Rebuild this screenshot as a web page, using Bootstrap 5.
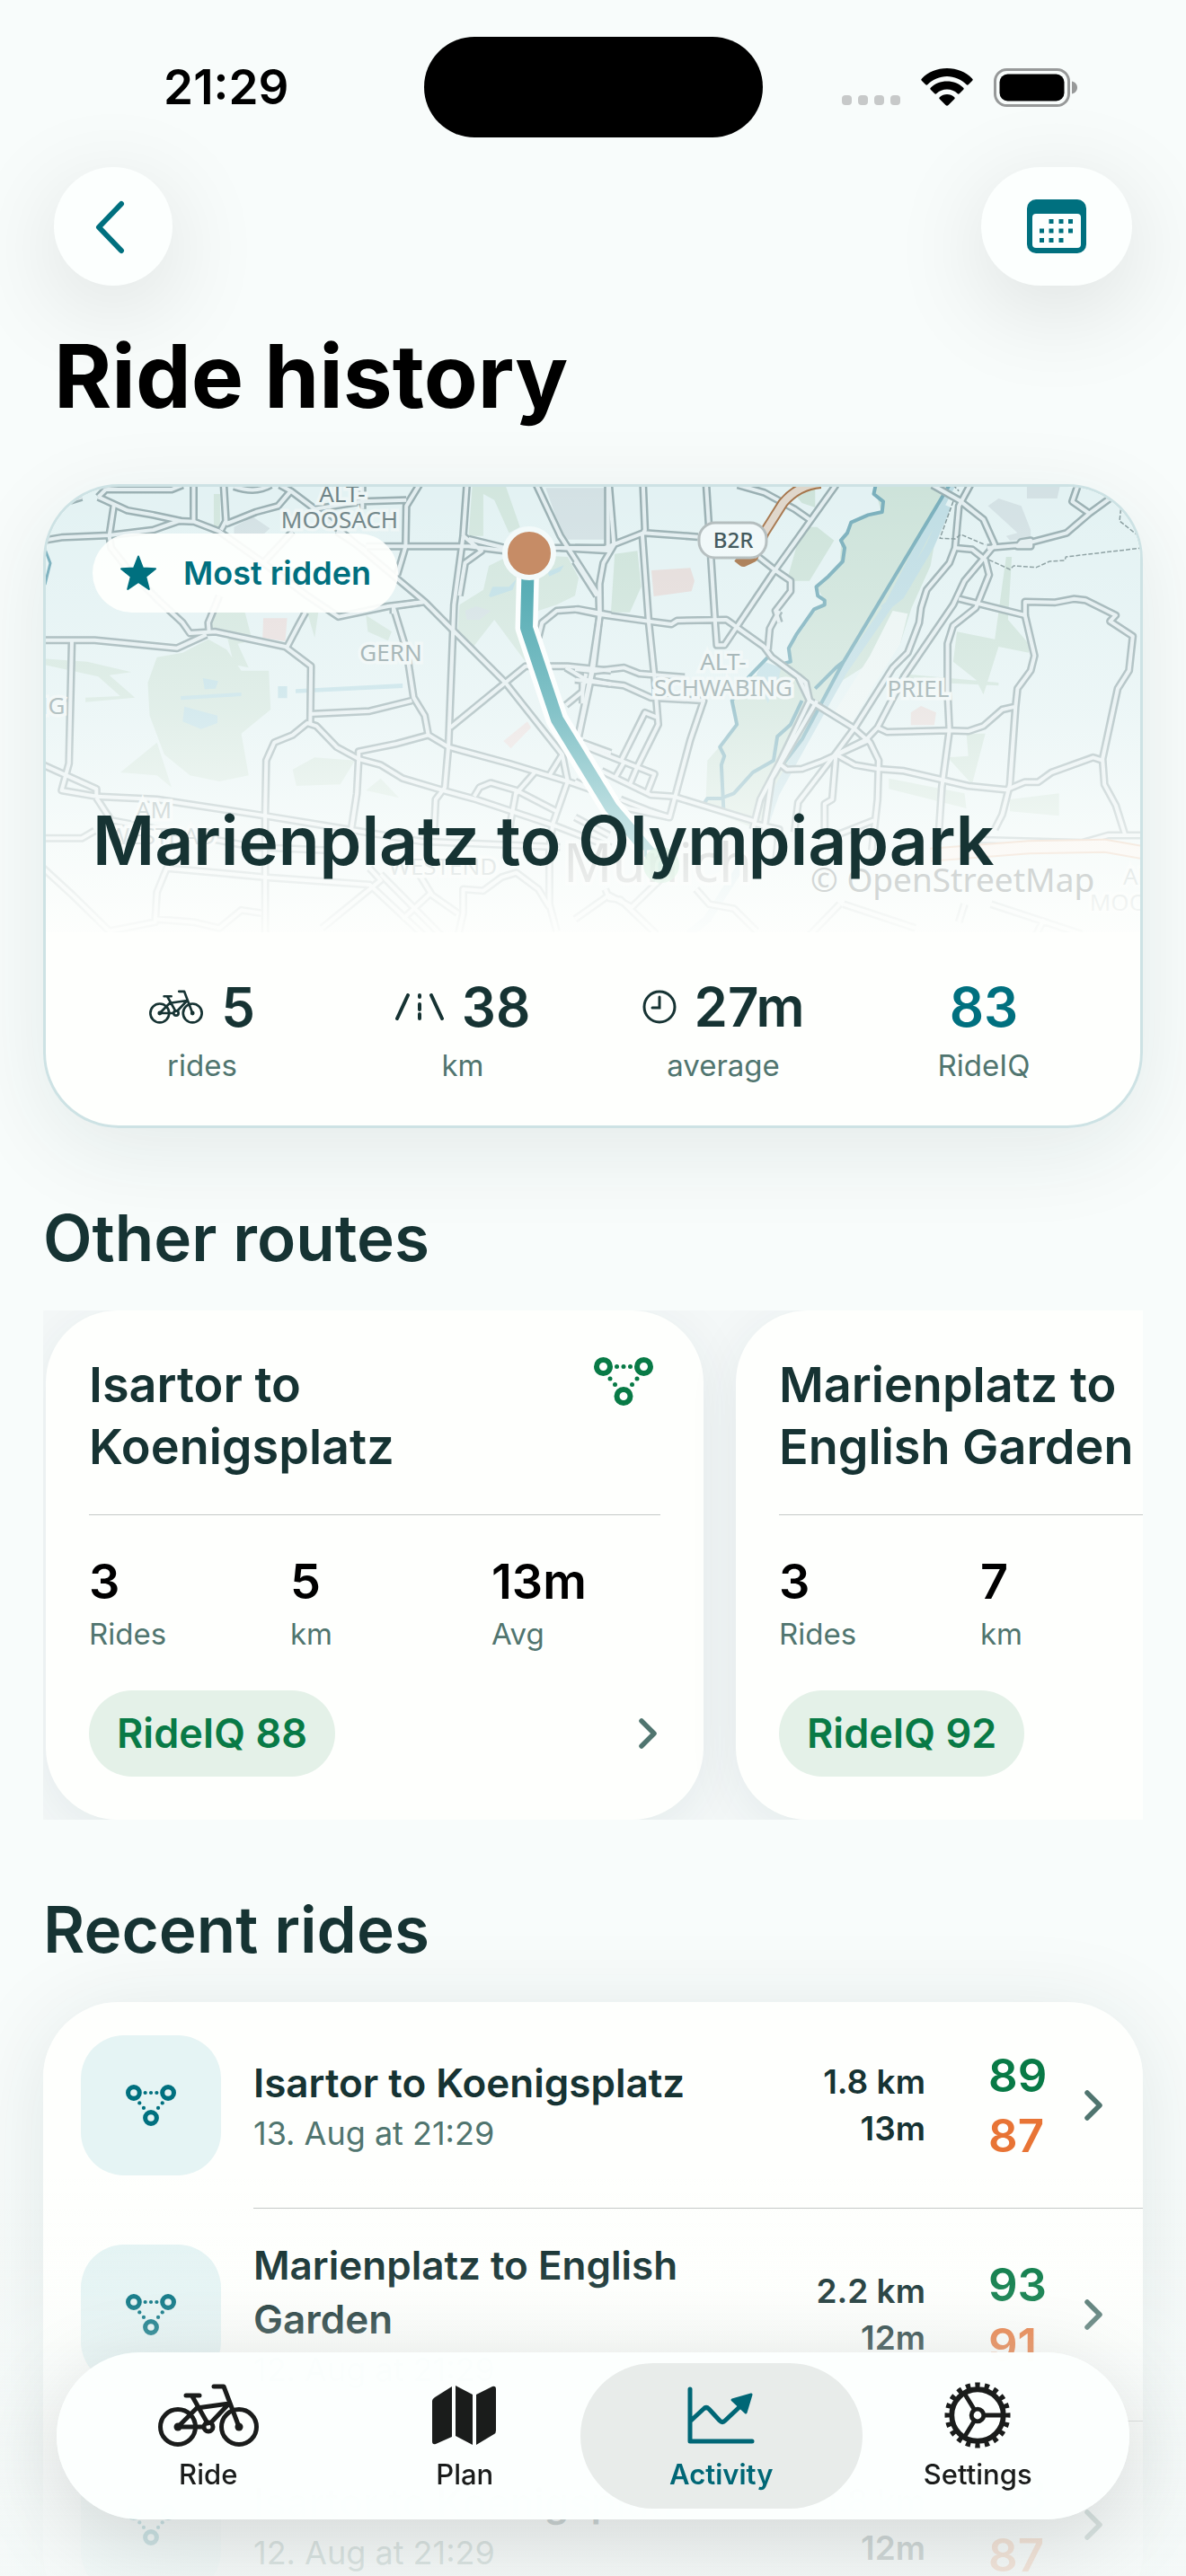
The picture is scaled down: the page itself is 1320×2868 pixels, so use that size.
<!DOCTYPE html>
<html lang="en">
<head>
<meta charset="utf-8">
<meta name="viewport" content="width=device-width, initial-scale=1">
<title>Ride history</title>
<link href="https://cdn.jsdelivr.net/npm/bootstrap@5.3.0/dist/css/bootstrap.min.css" rel="stylesheet">
<style>
  :root { --teal:#00707f; --ink:#163333; --soft:#50756f; --leaf:#087a46; --amber:#e87435; --paper:#fefffd; }
  html, body { height:100%; }
  body { font-family:Inter, "Liberation Sans", sans-serif; background:#f8fcfb; color:var(--ink); overflow:hidden; }
  a { color:inherit; text-decoration:none; }
  svg { display:block; flex:none; }
  .status { display:grid; grid-template-columns:1fr 377px 1fr; padding-top:41px; color:#000; }
  .clock { font-size:53px; line-height:60px; font-weight:600; padding-left:32px; }
  .island { height:112px; border-radius:56px; background:#000; }
  .signals { gap:23px; padding-right:32px; }
  .topnav { padding:33px 60px 0; }
  .round-btn { height:132px; min-width:132px; border:0; border-radius:66px; background:#fcfffe; color:var(--teal); box-shadow:0 24px 110px rgba(0,0,0,.12); }
  .round-btn.wide { min-width:168px; }
  .page-title { font-size:98px; line-height:120px; font-weight:700; color:#000; margin:41px 60px 60px; }
  .content { padding:0 48px; }
  .hero { border:3px solid #cde2e4; border-radius:84px; overflow:hidden; background:var(--paper); }
  .hero-shadow { border-radius:84px; box-shadow:0 24px 100px rgba(20,50,50,.09); }
  .hero-map { height:496px; padding:52px 52px 57px; }
  .hero-map > svg { position:absolute; inset:0; width:100%; height:100%; }
  .hero-pill { height:88px; border-radius:44px; background:rgba(254,255,253,.93); color:var(--teal); font-size:36px; line-height:44px; font-weight:600; padding:0 30px; gap:29px; }
  .hero-name { font-size:75px; line-height:90px; font-weight:600; }
  .hero-stats { padding:47px 29px; }
  .big-num { font-size:60px; line-height:72px; font-weight:600; gap:20px; }
  .tag-text { font-size:33px; line-height:40px; color:var(--soft); }
  .hero-stats .tag-text { margin-top:9px; }
  .section-title { font-size:71px; line-height:84px; font-weight:600; margin:80px 0 39px; }
  .strip { gap:36px; padding-left:3px; overflow:hidden; background:#f4f8f8; }
  .route { width:732px; flex:none; border-radius:80px; background:var(--paper); padding:48px; box-shadow:0 12px 60px rgba(20,60,70,.07); }
  .route-name { font-size:54px; line-height:69px; font-weight:600; }
  .hair { height:1px; background:#c5c9c7; }
  .route .hair { margin:41px 0 43px; }
  .trio { display:grid; grid-template-columns:repeat(3,1fr); gap:36px; }
  .mid-num { font-size:54px; line-height:62px; font-weight:600; color:#000; margin-bottom:7px; }
  .iq { height:96px; border-radius:48px; padding:0 31px; background:#e4f1e8; color:var(--leaf); font-size:45px; line-height:54px; font-weight:600; }
  .route-foot { margin-top:43px; color:var(--soft); }
  .rides { background:var(--paper); border-radius:84px; overflow:hidden; }
  .rides-shadow { border-radius:84px; box-shadow:0 12px 100px rgba(20,50,50,.1); }
  .ride { min-height:229px; padding:33px 45px 33px 42px; }
  .tile { width:156px; height:156px; border-radius:48px; background:#e5f4f4; color:var(--teal); margin-right:36px; flex:none; }
  .ride-name { font-size:44px; line-height:60px; font-weight:600; }
  .ride-date { font-size:36px; line-height:48px; color:var(--soft); margin-top:2px; }
  .ride-len { font-size:37px; line-height:52px; font-weight:600; margin:0 70px 0 36px; }
  .score { font-size:51px; line-height:67px; font-weight:600; width:65px; margin-right:42px; }
  .rides .hair { margin-left:234px; }
  .good { color:var(--leaf); } .fair { color:var(--amber); }
  .fade-out { position:fixed; left:0; right:0; bottom:0; height:450px; pointer-events:none;
    background:linear-gradient(rgba(244,249,248,0), rgba(244,249,248,.02) 18%, rgba(244,249,248,.12) 32%, rgba(244,249,248,.3) 42%, rgba(244,249,248,.82) 84%, rgba(244,249,248,.86)); }
  .tabs { position:fixed; left:63px; right:63px; bottom:63px; height:186px; border-radius:93px; padding:12px 26px; background:rgba(252,255,254,.985); box-shadow:0 24px 100px rgba(0,0,0,.14); }
  .tab { flex:1 1 0; color:#1a1c1b; font-size:31px; line-height:36px; font-weight:500; padding:21px 0 20px; }
  .tab.on { background:#e8ecea; color:#006776; border-radius:81px; margin:0 -14px; flex-basis:28px; font-weight:600; }
  .tab-icon { height:74px; }
  .town { font-family:"Noto Sans", sans-serif; font-size:26px; text-anchor:middle; fill:#8ba0a2; stroke:#eef6f6; stroke-width:7px; paint-order:stroke; }
  .web path, .line path { fill:none; vector-effect:non-scaling-stroke; stroke-linejoin:round; }
  .casing { stroke:#99afb2; stroke-width:9px; }
  .lane { stroke:#e3eef0; stroke-width:4px; }
</style>
</head>
<body>

<svg width="0" height="0" class="position-absolute" aria-hidden="true">
  <defs>
    <symbol id="bike" viewBox="0 0 112 70"><g fill="none" stroke="currentColor" stroke-width="5" stroke-linecap="round" stroke-linejoin="round"><circle cx="22" cy="48" r="19.5"/><circle cx="90" cy="48" r="19.5"/><path d="M62 3H73L90 48M31 13H46M38 14L55 44M50 48H22L43 27L79 22L59 43"/><circle cx="56" cy="48" r="5"/></g><circle cx="22" cy="48" r="4.500" fill="currentColor"/><circle cx="90" cy="48" r="4.500" fill="currentColor"/></symbol>
    <symbol id="nodes" viewBox="0 0 66 54"><g fill="none" stroke="currentColor" stroke-width="6"><circle cx="10.500" cy="10.500" r="7.500"/><circle cx="55.500" cy="10.500" r="7.500"/><circle cx="33" cy="43.500" r="7.500"/></g><g fill="currentColor"><circle cx="25.500" cy="10.500" r="2.500"/><circle cx="33" cy="10.500" r="2.500"/><circle cx="40.500" cy="10.500" r="2.500"/><circle cx="18" cy="24" r="2.500"/><circle cx="23.500" cy="30.500" r="2.500"/><circle cx="48" cy="24" r="2.500"/><circle cx="42.500" cy="30.500" r="2.500"/></g></symbol>
    <symbol id="next" viewBox="0 0 20 34"><path d="M3 3L17 17L3 31" fill="none" stroke="currentColor" stroke-width="5.500" stroke-linecap="round" stroke-linejoin="round"/></symbol>
  </defs>
</svg>

<header>
  <div class="status align-items-center">
    <div class="clock text-center">21:29</div>
    <div class="island"></div>
    <div class="signals d-flex justify-content-center align-items-center">
      <svg width="65" height="42" viewBox="0 0 65 42" fill="#c7c9c9"><rect y="30" width="11" height="11" rx="4"/><rect x="18" y="30" width="11" height="11" rx="4"/><rect x="36" y="30" width="11" height="11" rx="4"/><rect x="54" y="30" width="11" height="11" rx="4"/></svg>
      <svg width="58" height="42" viewBox="0 0 58 42"><path d="M29 0C40 0 50 4 57 11.500C58 12.500 58 13 57 14L53 18C52 19 51.500 19 50.500 18C45 12.500 37 9 29 9S13 12.500 7.500 18C6.500 19 6 19 5 18L1 14C0 13 0 12.500 1 11.500C8 4 18 0 29 0ZM29 14.500C36 14.500 42.500 17 47 21.500C48 22.500 48 23 47 24L43 28C42 29 41.500 29 40.500 28C37.500 25 33.500 23.500 29 23.500S20.500 25 17.500 28C16.500 29 16 29 15 28L11 24C10 23 10 22.500 11 21.500C15.500 17 22 14.500 29 14.500ZM29 29C32 29 35 30 37 32C38 33 38 33.500 37 34.500L30.500 41C29.500 42 28.500 42 27.500 41L21 34.500C20 33.500 20 33 21 32C23 30 26 29 29 29Z"/></svg>
      <svg width="93" height="43" viewBox="0 0 93 43"><rect x="1.500" y="1.500" width="82" height="40" rx="13" fill="none" stroke="#979999" stroke-width="3"/><rect x="6.500" y="6.500" width="72" height="30" rx="9"/><path d="M87 14.500C91 15.500 93 18.500 93 21.500S91 27.500 87 28.500Z" fill="#979999"/></svg>
    </div>
  </div>
  <nav class="topnav d-flex justify-content-between" aria-label="Page">
    <button type="button" class="round-btn d-flex align-items-center justify-content-center" aria-label="Back"><svg width="46" height="62" viewBox="0 0 46 62"><path d="M32 6L7 32L32 58" fill="none" stroke="currentColor" stroke-width="6" stroke-linecap="round" stroke-linejoin="round"/></svg></button>
    <button type="button" class="round-btn wide d-flex align-items-center justify-content-center" aria-label="Calendar"><svg width="66" height="60" viewBox="0 0 66 60"><rect width="66" height="60" rx="10" fill="currentColor"/><rect x="6" y="16" width="54" height="38" rx="4" fill="#fcfffe"/><path d="M24.500 24.500h5M35.500 24.500h5M46 24.500h5M14 35h5M24.500 35h5M35.500 35h5M46 35h5M14 45.500h5M24.500 45.500h5M35.500 45.500h5" stroke="currentColor" stroke-width="5"/></svg></button>
  </nav>
  <h1 class="page-title">Ride history</h1>
</header>

<main class="content">
  <div class="hero-shadow">
  <a href="#" class="hero d-block">
    <div class="hero-map position-relative d-flex flex-column justify-content-between align-items-start">
      <svg viewBox="3 3 1218 496" preserveAspectRatio="xMidYMid slice" role="img" aria-label="Map of Munich with the route">
        <defs>
          <linearGradient id="veil" x1="0" y1="0" x2="0" y2="1"><stop offset="0" stop-color="#fdfefd" stop-opacity="0"/><stop offset=".25" stop-color="#fdfefd" stop-opacity=".15"/><stop offset=".5" stop-color="#fdfefd" stop-opacity=".36"/><stop offset=".75" stop-color="#fefffd" stop-opacity=".68"/><stop offset="1" stop-color="#fefffd" stop-opacity=".96"/></linearGradient>
          <g id="west" class="web">
            <path d="M20 215L70 205L200 198L320 180L390 150L430 152L500 185L620 290L740 400L825 470L960 435L1060 420"/>
            <path d="M60 95L125 70M170 70L190 45L370 45L400 30M170 70L250 115L320 130L395 150"/>
            <path d="M213 95L200 200L205 240L250 310L330 410L400 490L420 525L490 520L680 570L750 635L748 830"/>
            <path d="M430 30V150M512 30L518 150L505 180M518 160L600 120L660 100L695 50L665 30M695 50L760 110L880 235L1060 420L1145 525L1280 690L1435 930L1450 1020"/>
            <path d="M540 35Q600 60 640 30M890 30V110M760 110L890 85L1010 80M1045 30L1010 100L1008 235L985 330M700 185L620 290"/>
            <path d="M820 185L900 250M900 235H1180L1280 250M1180 210L1280 240L1450 240L1568 240M1165 200L1215 250L1170 290L1155 400"/>
            <path d="M20 548L160 548L385 575L465 530M98 550L90 960L70 1050L165 1070V1045L20 965"/>
            <path d="M165 1070L330 1080L625 1135L800 1170L1050 1220L1430 1240M165 1075L205 1150L600 1240L800 1250"/>
            <path d="M625 1560V1130L628 950L650 890L700 865L740 825L765 835L820 905L880 945L940 965L1000 1010L1110 1050L1200 1080L1420 1170L1568 1240"/>
            <path d="M745 795L910 785L1025 750M975 440L1010 580L1030 740L1060 800L1070 865L1125 905L1290 960L1450 1020L1568 1070"/>
            <path d="M1070 865L980 895L880 920V945L875 1060L860 1180M1175 30L1165 200L1140 430L1125 900L1115 1040L1090 1080L1085 1200"/>
            <path d="M1130 840L1200 770L1280 690L1335 635L1450 635L1568 650M1365 30L1430 200L1535 400L1537 470L1520 640L1480 870M1560 30V240"/>
            <path d="M1568 465L1480 445L1420 450L1380 490L1370 540M1445 640L1500 680L1568 695M1500 660L1490 720L1445 765M1430 240L1568 250"/>
            <path d="M735 455L715 500L685 570M500 400L470 490L472 520M1060 420L975 435V460"/>
            <path d="M20 1210L125 1210L160 1185M360 1300L330 1390L325 1490L200 1520L100 1400L20 1310M325 1480L430 1490L500 1510L560 1450L615 1460M360 1310L625 1340L910 1365L1080 1560"/>
            <path d="M910 1310L940 1350L780 1510M940 1330L1110 1540M1075 1395L1000 1480M1030 1300L1080 1400L1150 1460M1400 1240V1430L1420 1520M1150 1540L1165 1460V1380L1220 1385L1270 1340L1310 1325L1370 1380L1400 1440"/>
            <path d="M1195 1070L1210 1040L1240 1025L1310 1050L1420 1120M1310 1050L1295 1150L1280 1280M1360 990L1310 1060M1435 930L1400 1000M1450 1020L1410 1160L1400 1240M1490 890L1568 925"/>
          </g>
          <g id="east" class="web">
            <path d="M0 240L75 242L180 190L325 203M90 30L103 230L75 290L65 360L66 460L42 660L10 860M180 30L185 180L178 195L195 490L210 670L220 830L165 970L145 1030"/>
            <path d="M347 30L370 480L375 565L395 565L520 330L690 30M0 445L66 462L195 485L255 495L270 483L400 480L500 570L520 605L590 670L620 750L735 840L780 890L803 950L800 1080L785 1250"/>
            <path d="M0 285L58 400M430 30L500 55L580 110L620 145M485 270L530 315L570 350V385L530 450L540 490M540 450L515 510L510 580"/>
            <path d="M0 645L50 652L130 640L170 660L290 672M0 680L130 700L200 740L340 750L305 880L250 1140L200 1120M0 890L130 955L210 995L190 1060M120 955L185 790L215 805M130 955L105 1010M20 670V760"/>
            <path d="M70 985L200 1065L260 1070L480 1155M0 1020L140 1110L250 1140M590 670L610 690L620 750L540 960L490 1080L470 1180M640 750L520 1010L500 1180M540 960L560 980L600 978L650 955L780 880"/>
            <path d="M945 30L1015 80L1080 145L1110 230L1080 275L1030 350L1000 430L870 670L800 840L770 880L690 930"/>
            <path d="M1045 30L1015 100L1005 240L990 290L930 380L915 440L910 490L880 590L840 640L740 840L690 925L590 1090L580 1190"/>
            <path d="M1005 240L1050 245L1085 280L1095 330L1060 440L1000 500L985 560L985 720L990 850L970 1040L960 1230"/>
            <path d="M1090 240L1180 230L1300 190L1360 125L1425 65M1360 125L1315 85L1330 30M1015 410L1190 465M1170 235L1180 220L1205 215V235Z"/>
            <path d="M1190 465V420L1270 422L1320 410L1350 415L1430 465L1415 485L1475 535L1465 650L1435 710L1395 945L1400 1030L1430 1100L1455 1200"/>
            <path d="M1190 465L1215 600L1205 650L1170 710L1165 770L1150 1030L1130 1130L1110 1180M800 840L825 855L985 850L1040 852L1080 835L1130 780L1165 770"/>
            <path d="M690 930L740 965L800 978L870 985L1040 1035L1140 1048L1190 1022H1225L1260 990L1370 940L1395 950M690 930L680 1080L660 1095V1200M790 1150L690 1200"/>
            <path d="M1060 1215L1340 1225L1410 1200L1500 1200M0 1480L90 1400L150 1440L240 1330M80 1380L90 1410L120 1415L215 1530M320 1380L355 1430L420 1445L480 1520M700 1430L600 1560M710 1430L900 1510M1030 1430L1015 1490M1100 1430L1340 1530M1240 1480L1220 1530M0 1140L90 1200M120 1080L220 1130M470 1160L540 1180L530 1300"/>
          </g>
        </defs>
        <rect x="0" y="0" width="1224" height="502" fill="#e3f2f3"/>
        <g transform="translate(-8 -9) scale(.40816 .33333)">
          <path fill="#d2e6de" d="M330 605L400 590L470 545L520 580L560 650H635L640 780L560 860L580 1000L500 1020L420 1000L350 930L310 800L305 690ZM1235 300L1300 260L1450 270L1480 340L1470 400L1420 430L1370 450L1335 620L1250 480L1180 590L1150 520L1155 430L1220 380ZM700 980L760 940L870 950L830 1030L710 1035ZM20 610L140 620L260 655L200 665L270 740L135 755V740L230 735L170 670L20 630ZM480 455H570L590 550L550 560L580 640L540 630L520 530L480 510ZM485 60H502V190H485ZM1190 30H1280L1320 170L1290 190L1250 80L1220 60V200H1180ZM900 465L970 520L960 550L905 520ZM230 990L330 890L370 1040L330 1000ZM740 455H770L760 540ZM900 1050L990 1075L940 1010Z"/>
          <path fill="#bfdfe6" d="M395 735L560 723V735L395 748ZM708 712L1000 693V708L708 725ZM455 675L497 685L490 710L460 712ZM405 770L495 800V825L450 845L400 820ZM660 702H685V742H660ZM1235 400L1245 370L1290 370L1310 345L1300 380L1240 405ZM1395 320L1440 298L1430 318L1400 335Z"/>
          <path fill="#e7dedd" d="M620 475H685L680 552L618 540ZM1275 885L1340 820L1350 840L1295 910Z"/>
          <path fill="#d3e1e4" d="M1390 40H1568V212L1440 212ZM540 170L590 135L638 175L620 195H540ZM1170 450L1200 435L1240 450L1210 480L1175 480Z"/>
        </g>
        <g transform="translate(592 -9) scale(.42088 .33333)">
          <path fill="#cde3da" d="M790 30H985L960 160L940 300L890 440L860 560L710 680L650 780L560 1000L480 1180L345 1110L350 950L385 900L430 830L420 750L470 670L565 620L570 570L640 440L660 420L640 370L700 290L705 215L730 155L810 120ZM600 170H640L685 215L620 350L560 350ZM580 60L635 40V105L600 90ZM105 260L165 250L175 370L145 455L95 455ZM1115 500L1140 270H1155L1145 480L1200 560V590L1120 570L1080 730L1060 680L1000 620L1010 520L1110 545ZM1035 860H1085L1050 1030L985 940L1040 935ZM830 1010L1030 1060L1035 1110L830 1045ZM1150 1080L1280 1060V1135L1150 1120ZM860 660L1120 690V700L870 685Z"/>
          <path fill="#eaf4f3" d="M840 450L880 460L860 560L790 700L720 850L680 800L780 600Z"/>
          <path fill="#c0dfe6" d="M480 660L500 620L545 640L540 670L510 760Z"/>
          <path fill="#e4dcda" d="M202 315L305 307L316 350L308 385L208 402ZM888 790L915 768L955 790L950 832H888Z"/>
          <path fill="#d3e1e4" d="M1092 100L1120 75L1180 100L1205 180V210L1150 215L1140 200L1170 190ZM1195 35H1282L1275 75H1195Z"/>
          <g class="line">
            <path stroke="#bfdde4" stroke-width="9" d="M995 30L830 430L710 650L600 900L530 1060L500 1170M985 100L940 230L860 400L815 445M440 1300L350 1480L300 1530"/>
            <path stroke="#78aebb" stroke-width="4" d="M990 30L710 620L600 880L540 980M795 30L790 60L815 85L812 120L775 130L730 155L720 190L703 215L713 240L708 285L670 335L638 370L642 400L660 415V430L632 445L585 530L565 575L570 620L555 625M510 605L460 670L415 750L428 830L383 905L395 935L387 965L393 1120M710 620L690 640L635 710M600 750L570 830L535 870L525 950L470 990L420 1060L385 1077H350L340 1095"/>
          </g>
        </g>
        <g class="line"><path stroke="#6fa9b8" stroke-width="3" d="M1 70L8 88L2 112"/></g>
        <g class="casing"><g transform="translate(-8 -9) scale(.40816 .33333)"><use href="#west"/></g><g transform="translate(592 -9) scale(.42088 .33333)"><use href="#east"/></g></g>
        <g class="lane"><g transform="translate(-8 -9) scale(.40816 .33333)"><use href="#west"/></g><g transform="translate(592 -9) scale(.42088 .33333)"><use href="#east"/></g></g>
        <g class="line" transform="translate(592 -9) scale(.42088 .33333)">
          <path stroke="#a5744a" stroke-width="12" d="M650 24Q590 30 550 90L500 190L470 270L445 285L430 270"/><path stroke="#dfd6ca" stroke-width="8" d="M650 24Q590 30 550 90L500 190L470 270"/>
          <path stroke="#dfb595" stroke-width="16" d="M940 1265L1200 1240L1400 1235L1505 1258"/><path stroke="#f4ebe4" stroke-width="12" d="M940 1265L1200 1240L1400 1235L1505 1258"/>
          <path stroke="#84999b" stroke-width="1.500" stroke-dasharray="5 2" d="M1095 280L1150 312L1160 300L1220 305L1255 285L1295 282L1298 270L1500 240M1445 90L1440 150L1500 210M1000 85L965 208L1005 210L1020 195L1085 230M1000 30L1015 50"/>
        </g>
        <g fill="none" stroke-linecap="round" stroke-linejoin="round"><path stroke="#fbfefe" stroke-width="25" d="M540 77L538 160L572 262L632 360L688 426"/><path stroke="#3fa1aa" stroke-width="14" d="M540 77L538 160L572 262L632 360L688 426"/></g>
        <text class="town" style="font-size:60px;fill:#8e9697" x="684" y="443">Munich</text>
        <circle cx="688" cy="424" r="20" fill="#7ccf9f" opacity=".75"/>
        <g>
          <text class="town" x="333" y="20" style="fill:#6d8285">ALT-</text><text class="town" x="330" y="49" style="fill:#6d8285">MOOSACH</text>
          <text class="town" x="387" y="197">GERN</text><text class="town" x="5" y="256">NG</text>
          <text class="town" x="123" y="372">AM</text><text class="town" x="132" y="401">WESTBAD</text><text class="town" x="445" y="435">WESTEND</text>
          <text class="town" x="757" y="207">ALT-</text><text class="town" x="757" y="236">SCHWABING</text><text class="town" x="974" y="237">PRIEL</text>
          <text class="town" x="1222" y="446">AM</text><text class="town" x="1204" y="475">MOOS</text>
        </g>
        <rect x="730" y="43" width="75" height="39" rx="18" fill="#f0f8f9" stroke="#b0babb" stroke-width="3"/>
        <text x="768" y="71" text-anchor="middle" style="font:500 24px 'Noto Sans',sans-serif;fill:#344c50">B2R</text>
        <rect x="0" y="0" width="1224" height="502" fill="url(#veil)"/>
        <circle cx="541" cy="77" r="27" fill="#c68c66" stroke="#f3fafa" stroke-width="6"/>
        <text x="854" y="454" style="font:400 37px 'Noto Sans',sans-serif;fill:#d3d7d6">© OpenStreetMap</text>
      </svg>
      <div class="hero-pill position-relative d-flex align-items-center">
        <svg width="42" height="40" viewBox="0 0 42 40" fill="currentColor" stroke="currentColor" stroke-width="2" stroke-linejoin="round"><path d="M21 1.500L26 14.500L40 15.300L29.200 24L32.800 38L21 30L9.200 38L12.800 24L2 15.300L16 14.500Z"/></svg>
        <span>Most ridden</span>
      </div>
      <div class="hero-name position-relative text-nowrap">Marienplatz to Olympiapark</div>
    </div>
    <div class="hero-stats row g-0 text-center">
      <div class="col"><div class="big-num d-flex align-items-center justify-content-center"><svg width="60" height="38"><use href="#bike"/></svg>5</div><div class="tag-text">rides</div></div>
      <div class="col"><div class="big-num d-flex align-items-center justify-content-center"><svg width="54" height="30" viewBox="0 0 54 30" fill="none" stroke="currentColor" stroke-width="4" stroke-linecap="round"><path d="M14 2L2 28M40 2L52 28M27 2V4M27 12V18M27 23V28"/></svg>38</div><div class="tag-text">km</div></div>
      <div class="col"><div class="big-num d-flex align-items-center justify-content-center"><svg width="38" height="38" viewBox="0 0 38 38" fill="none" stroke="currentColor" stroke-width="3" stroke-linecap="round"><circle cx="19" cy="19" r="17"/><path d="M19 8V20H11"/></svg>27m</div><div class="tag-text">average</div></div>
      <div class="col"><div class="big-num" style="color:var(--teal)">83</div><div class="tag-text">RideIQ</div></div>
    </div>
  </a>
  </div>

  <h2 class="section-title">Other routes</h2>
  <div class="strip d-flex">
    <a href="#" class="route">
      <div class="d-flex justify-content-between align-items-start"><div class="route-name">Isartor to<br>Koenigsplatz</div><svg class="me-2 mt-1" width="66" height="54"><use href="#nodes" color="#087a46"/></svg></div>
      <div class="hair"></div>
      <div class="trio"><div><div class="mid-num">3</div><div class="tag-text">Rides</div></div><div><div class="mid-num">5</div><div class="tag-text">km</div></div><div><div class="mid-num">13m</div><div class="tag-text">Avg</div></div></div>
      <div class="route-foot d-flex justify-content-between align-items-center"><span class="iq d-flex align-items-center">RideIQ 88</span><svg width="20" height="34" class="me-1"><use href="#next"/></svg></div>
    </a>
    <a href="#" class="route">
      <div class="d-flex justify-content-between align-items-start"><div class="route-name">Marienplatz to<br>English Garden</div><svg class="me-2 mt-1" width="66" height="54"><use href="#nodes" color="#087a46"/></svg></div>
      <div class="hair"></div>
      <div class="trio"><div><div class="mid-num">3</div><div class="tag-text">Rides</div></div><div><div class="mid-num">7</div><div class="tag-text">km</div></div><div><div class="mid-num">12m</div><div class="tag-text">Avg</div></div></div>
      <div class="route-foot d-flex justify-content-between align-items-center"><span class="iq d-flex align-items-center">RideIQ 92</span><svg width="20" height="34" class="me-1"><use href="#next"/></svg></div>
    </a>
  </div>

  <h2 class="section-title">Recent rides</h2>
  <div class="rides-shadow">
  <div class="rides">
    <a href="#" class="ride d-flex align-items-center">
      <span class="tile d-flex align-items-center justify-content-center"><svg width="56" height="46"><use href="#nodes"/></svg></span>
      <div class="flex-grow-1"><div class="ride-name">Isartor to Koenigsplatz</div><div class="ride-date">13. Aug at 21:29</div></div>
      <div class="ride-len text-end text-nowrap">1.8 km<br>13m</div>
      <div class="score"><div class="good">89</div><div class="fair">87</div></div>
      <svg width="20" height="34" color="#50756f"><use href="#next"/></svg>
    </a>
    <div class="hair"></div>
    <a href="#" class="ride d-flex align-items-center">
      <span class="tile d-flex align-items-center justify-content-center"><svg width="56" height="46"><use href="#nodes"/></svg></span>
      <div class="flex-grow-1"><div class="ride-name">Marienplatz to English Garden</div><div class="ride-date">12. Aug at 21:29</div></div>
      <div class="ride-len text-end text-nowrap">2.2 km<br>12m</div>
      <div class="score"><div class="good">93</div><div class="fair">91</div></div>
      <svg width="20" height="34" color="#50756f"><use href="#next"/></svg>
    </a>
    <div class="hair"></div>
    <a href="#" class="ride d-flex align-items-center">
      <span class="tile d-flex align-items-center justify-content-center"><svg width="56" height="46"><use href="#nodes"/></svg></span>
      <div class="flex-grow-1"><div class="ride-name">Isartor to Koenigsplatz</div><div class="ride-date">12. Aug at 21:29</div></div>
      <div class="ride-len text-end text-nowrap">1.8 km<br>12m</div>
      <div class="score"><div class="good">88</div><div class="fair">87</div></div>
      <svg width="20" height="34" color="#50756f"><use href="#next"/></svg>
    </a>
  </div>
  </div>
</main>

<div class="fade-out"></div>
<nav class="tabs d-flex" aria-label="Main">
  <a href="#" class="tab d-flex flex-column align-items-center justify-content-between"><span class="tab-icon d-flex align-items-center"><svg width="112" height="70"><use href="#bike"/></svg></span>Ride</a>
  <a href="#" class="tab d-flex flex-column align-items-center justify-content-between"><span class="tab-icon d-flex align-items-center"><svg width="72" height="66" viewBox="0 0 72 66" fill="currentColor"><path d="M3 13L22 1V57L4 65Q0 66 0 62V17Q0 15 3 13ZM26 0L45 10V66L26 56ZM49 10L67 1Q71 0 71 4V50Q71 53 69 54L49 66Z"/></svg></span>Plan</a>
  <a href="#" class="tab on d-flex flex-column align-items-center justify-content-between" aria-current="page"><span class="tab-icon d-flex align-items-center"><svg width="75" height="64" viewBox="0 0 75 64" fill="none" stroke="currentColor" stroke-width="5" stroke-linecap="round" stroke-linejoin="round"><path d="M3 3V61H72M4 38L18 25Q21 22 24 25L36 38Q39 41 42 38L60 21"/><path d="M50 15L71 9L65 29Z" fill="currentColor" stroke-width="3"/></svg></span>Activity</a>
  <a href="#" class="tab d-flex flex-column align-items-center justify-content-between"><span class="tab-icon d-flex align-items-center"><svg width="76" height="74" viewBox="0 0 76 76" fill="none" stroke="currentColor"><circle cx="38" cy="38" r="29.500" stroke-width="6"/><circle cx="38" cy="38" r="34" stroke-width="7" pathLength="80" stroke-dasharray="2 2" stroke-dashoffset="1"/><circle cx="38" cy="38" r="7" stroke-width="5"/><path stroke-width="5" d="M46 38H67M34 31L23 13M34 45L23 63"/></svg></span>Settings</a>
</nav>
<script src="https://cdn.jsdelivr.net/npm/bootstrap@5.3.0/dist/js/bootstrap.bundle.min.js"></script>
</body>
</html>
